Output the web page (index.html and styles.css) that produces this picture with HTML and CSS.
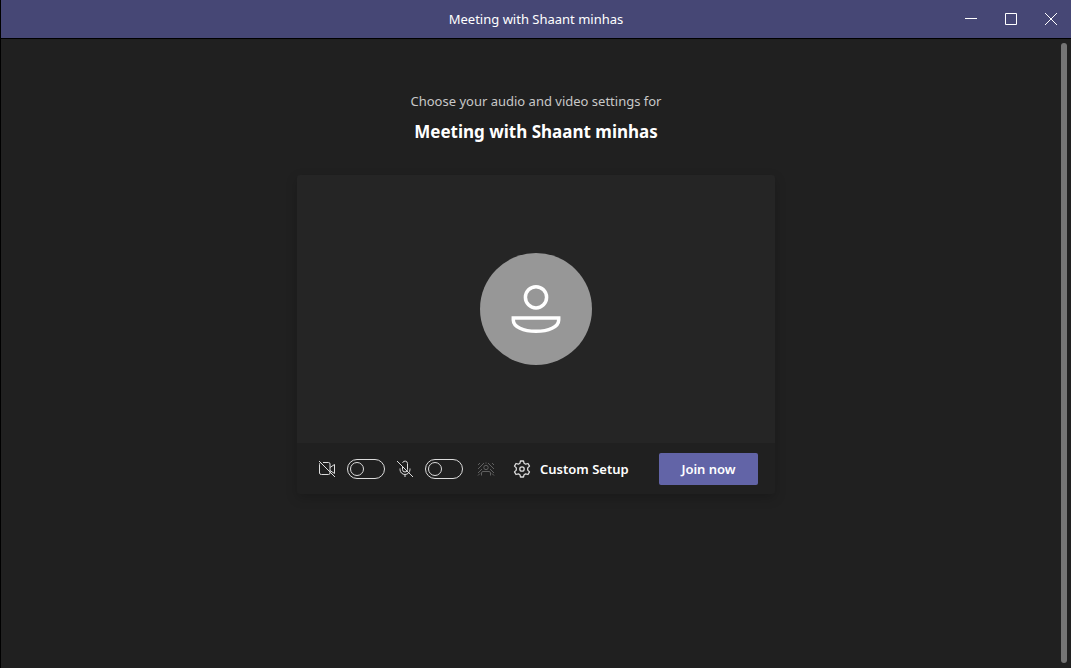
FILE: index.html
```html
<!DOCTYPE html>
<html lang="en">
<head>
<meta charset="utf-8">
<meta name="viewport" content="width=device-width, initial-scale=1">
<title>Meeting with Shaant minhas</title>
<link rel="stylesheet" href="styles.css">
</head>
<body>
<div class="window">
  <header class="titlebar">
    <span class="titlebar-text">Meeting with Shaant minhas</span>
    <div class="window-buttons">
      <button class="window-button" type="button" aria-label="Minimize">
        <svg width="14" height="14" viewBox="0 0 14 14"><path d="M1 6.5h12"/></svg>
      </button>
      <button class="window-button" type="button" aria-label="Maximize">
        <svg width="14" height="14" viewBox="0 0 14 14"><path d="M1.5 1.5h11v11h-11z"/></svg>
      </button>
      <button class="window-button" type="button" aria-label="Close">
        <svg width="14" height="14" viewBox="0 0 14 14"><path d="M1 1l12 12M13 1L1 13"/></svg>
      </button>
    </div>
  </header>
  <main class="prejoin">
    <p class="hint">Choose your audio and video settings for</p>
    <h1 class="meeting-name">Meeting with Shaant minhas</h1>
    <section class="card">
      <div class="preview">
        <div class="avatar">
          <svg width="112" height="112" viewBox="0 0 112 112"><circle cx="56" cy="44.300" r="10.600" stroke-width="3.500"/><path stroke-width="3.500" d="M33.300 65h45.400v2c0 7-10.200 11.300-22.700 11.300S33.300 74 33.300 67z"/></svg>
        </div>
      </div>
      <div class="controls">
        <label class="device" for="camera">
          <svg class="icon" width="18" height="18" viewBox="0 0 18 18" aria-label="Camera"><path d="M5 2.500h5.500q1.500 0 1.500 1.500v9q0 1.500-1.500 1.500h-7Q1.500 14.500 1.500 13V4.500q0-1.200.8-1.700M12 7.500l4.500-3v9l-4.500-3M1 1l16 16"/></svg>
        </label>
        <input class="toggle" id="camera" type="checkbox">
        <label class="device" for="microphone">
          <svg class="icon" width="18" height="18" viewBox="0 0 18 18" aria-label="Microphone"><path d="M6.500 6.500V9.500a2.500 2.500 0 0 0 5 0V3.500a2.500 2.500 0 0 0-4.900-.6M4 8.500v1a5 5 0 0 0 10 0v-1M9 14.500V17M1 1l16 16"/></svg>
        </label>
        <input class="toggle" id="microphone" type="checkbox">
        <button class="effects" type="button" aria-label="Background effects" disabled>
          <svg class="icon" width="18" height="18" viewBox="0 0 18 18"><path d="M1 5l2-2M1 9l6-6M1 13l4-4M17 5l-2-2M17 9l-6-6M17 13l-4-4M8.500 3h1M1 15.500l2-2M17 15.500l-2-2"/><circle cx="9" cy="7.500" r="2.200"/><path d="M4.500 15.500V13q0-1.500 1.500-1.500h6q1.500 0 1.500 1.500v2.500"/></svg>
        </button>
        <button class="setup" type="button">
          <svg class="icon gear" width="18" height="18" viewBox="0 0 18 18"><path d="M7.500 1h3l.6 2.300 1.500.9 2.400-.7 1.500 2.600-1.800 1.800v2.200l1.800 1.800-1.500 2.600-2.400-.7-1.500.9-.6 2.300h-3l-.6-2.300-1.500-.9-2.400.7-1.500-2.600 1.800-1.800V7.900L1.500 6.100 3 3.500l2.400.7 1.500-.9z"/><circle cx="9" cy="9" r="2.200"/></svg>
          <span>Custom Setup</span>
        </button>
        <button class="join" type="button">Join now</button>
      </div>
    </section>
  </main>
  <div class="scrollbar"></div>
</div>
</body>
</html>
```
FILE: styles.css
```css
* {
  box-sizing: border-box;
}

body {
  margin: 0;
  background: #202020;
  color: #fff;
  font-family: "Segoe UI", "Noto Sans", "Open Sans", sans-serif;
  font-size: 13px;
  line-height: 20px;
}

svg {
  display: block;
  fill: none;
  stroke: currentColor;
}

button {
  margin: 0;
  padding: 0;
  border: 0;
  background: none;
  color: inherit;
  font: inherit;
}

.window {
  position: relative;
  display: flex;
  flex-direction: column;
  min-height: 100vh;
  border-left: 1px solid #000;
}

.titlebar {
  display: grid;
  grid-template-columns: 1fr auto 1fr;
  align-items: center;
  height: 39px;
  border-bottom: 1px solid #000;
  background: #464775;
}

.titlebar-text {
  grid-column: 2;
}

.window-buttons {
  display: flex;
  justify-content: flex-end;
}

.window-button {
  display: grid;
  place-items: center;
  width: 40px;
  height: 38px;
}

.prejoin {
  display: flex;
  flex-direction: column;
  align-items: center;
  padding: 52px 16px;
}

.hint {
  margin: 0;
  color: #c8c8c8;
}

.meeting-name {
  margin: 9px 0 31px;
  font-size: 17px;
  font-weight: 700;
  line-height: 24px;
}

.card {
  width: 100%;
  max-width: 478px;
  border-radius: 3px;
  background: #202020;
  box-shadow: 0 4px 12px rgba(0, 0, 0, 0.2);
}

.preview {
  display: grid;
  place-items: center;
  height: 268px;
  border-radius: 3px 3px 0 0;
  background: #252525;
}

.avatar {
  border-radius: 50%;
  background: #979797;
}

.controls {
  display: flex;
  align-items: center;
  height: 51px;
  padding: 0 17px 0 21px;
}

.icon {
  color: #dcdcdc;
}

.gear {
  stroke-width: 1.3;
  stroke-linejoin: round;
}

.toggle {
  appearance: none;
  display: flex;
  align-items: center;
  width: 38px;
  height: 20px;
  margin: 0 11px;
  padding: 0 2px;
  border: 1px solid #dcdcdc;
  border-radius: 10px;
}

.toggle::before {
  content: "";
  box-sizing: border-box;
  width: 14px;
  height: 14px;
  border: 1px solid #dcdcdc;
  border-radius: 50%;
}

.toggle:checked {
  justify-content: flex-end;
}

.effects {
  margin: 0 18px 0 3px;
}

.effects .icon {
  color: #606060;
}

.setup {
  display: flex;
  align-items: center;
  gap: 9px;
  font-weight: 600;
}

.join {
  width: 99px;
  height: 32px;
  margin-left: auto;
  border-radius: 2px;
  background: #6264a7;
  font-weight: 600;
}

.scrollbar {
  position: absolute;
  top: 43px;
  right: 4px;
  bottom: 5px;
  width: 6px;
  border-radius: 3px;
  background: #757575;
}
```
